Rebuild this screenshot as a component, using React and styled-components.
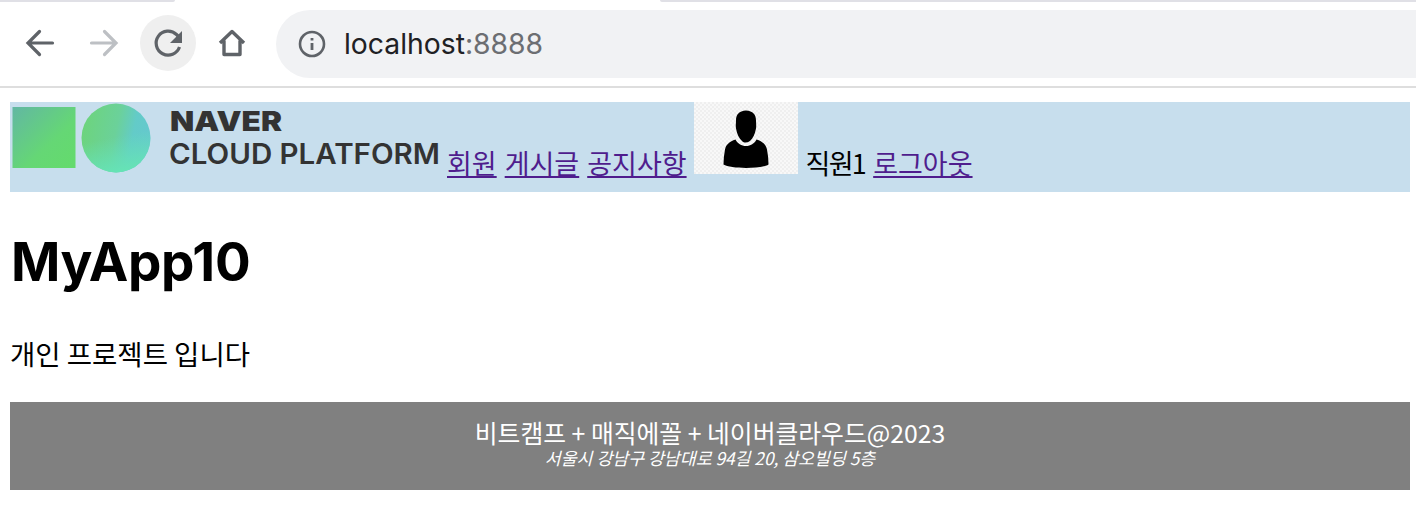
import React from "react";
import styled, { createGlobalStyle } from "styled-components";

const Global = createGlobalStyle`
  html, body { margin: 0; padding: 0; background: #fff; overflow: hidden; }
  body { font-family: Inter, "Noto Sans CJK KR", sans-serif; color: #000; }
`;
const KR = `"Noto Sans CJK KR", "Liberation Sans", sans-serif`;

const Chrome = styled.div`
  height: 88px; box-sizing: border-box; border-bottom: 2px solid #dedede; position: relative;
  display: flex; align-items: center; padding: 0 0 0 12px; background: #fff;
`;
const TabEdge = styled.div`
  position: absolute; top: 0; height: 2px; background: #e0e0e6; left: ${p => p.$l}px; right: ${p => p.$r}px;
  border-radius: ${p => p.$round};
`;
const IconSlot = styled.div`
  width: 56px; height: 56px; flex: none; border-radius: 50%; display: flex; align-items: center; justify-content: center;
  margin-right: 8px; background: ${p => p.$active ? "#efefef" : "transparent"};
`;
const UrlBar = styled.div`
  flex: 1; height: 68px; margin-left: 8px; margin-top: 2px; background: #f1f2f4; border-radius: 34px 0 0 34px;
  display: flex; align-items: center; padding-left: 22px; font: 400 28.3px Inter, sans-serif; color: #202124;
`;
const Host = styled.span` margin-left: 18px; `;
const Port = styled.span` color: #6c6e72; `;

const Page = styled.div` padding: 14px 6px 0 10px; `;
const Header = styled.header`
  background: #c7deed; height: 90px; box-sizing: border-box; font: 400 27px/30px ${KR}; white-space: nowrap;
  display: flex; align-items: flex-end;
`;
const Logo = styled.svg` display: block; flex: none; `;
const Nav = styled.a` color: #4f1d8d; text-decoration: underline; margin-left: ${p => p.$ml}px; padding-bottom: 14px; line-height: 30px; `;
const Avatar = styled.div`
  width: 104px; height: 72px; flex: none; margin: 0 8px 0 7px; align-self: flex-start;
  background-color: #f3f3f3;
  background-image: repeating-conic-gradient(#efefef 0 25%, #f8f8f8 0 50%);
  background-size: 4px 4px;
  display: flex; align-items: center; justify-content: center;
`;
const Who = styled.span` padding-bottom: 14px; letter-spacing: -1.7px; `;
const Title = styled.h1` font: 700 53px/64px Inter, sans-serif; letter-spacing: -0.3px; margin: 38px 0 0 1px; `;
const Para = styled.p` font: 400 27.5px/36px ${KR}; margin: 41px 0 0; `;
const Footer = styled.footer`
  margin-top: 31px; background: #808080; color: #fff; height: 88px; box-sizing: border-box; padding-top: 14px;
  text-align: center; font-family: ${KR};
`;
const FootMain = styled.div` font-size: 24.8px; line-height: 32px; `;
const FootSub = styled.div` font-size: 17.3px; line-height: 20px; font-style: italic; `;

export default function App() {
  return (
    <>
      <Global />
      <Chrome>
        <TabEdge $l={0} $r={1241} $round="0 0 6px 0" />
        <TabEdge $l={660} $r={0} $round="0 0 0 6px" />
        <IconSlot>
          <svg width="32" height="32" viewBox="0 0 32 32" fill="none" stroke="#5f6368" strokeWidth="3.2" strokeLinecap="round"><path d="M28.500 16H4.500M15.500 4.500 4 16l11.500 11.500" /></svg>
        </IconSlot>
        <IconSlot>
          <svg width="32" height="32" viewBox="0 0 32 32" fill="none" stroke="#bdc0c4" strokeWidth="3.2" strokeLinecap="round"><path d="M3.500 16h24M16.500 4.500 28 16 16.500 27.500" /></svg>
        </IconSlot>
        <IconSlot $active>
          <svg width="32" height="32" viewBox="0 0 32 32" fill="none"><path d="M27.500 20a12 12 0 1 1-3-12.500L27 10" stroke="#5f6368" strokeWidth="3.2" /><path d="M30 4v12H18z" fill="#5f6368" /></svg>
        </IconSlot>
        <IconSlot>
          <svg width="30" height="30" viewBox="0 0 30 30" fill="none" stroke="#5f6368" strokeWidth="3.4"><path d="M3 15 15 3.500 27 15M7 12.500V26.500h16V12.500" strokeLinejoin="round" /></svg>
        </IconSlot>
        <UrlBar>
          <svg width="28" height="28" viewBox="0 0 28 28" fill="none"><circle cx="14" cy="14" r="12" stroke="#5f6368" strokeWidth="2.6" /><path d="M14 13v7M14 8v2.600" stroke="#5f6368" strokeWidth="2.8" /></svg>
          <Host>localhost<Port>:8888</Port></Host>
        </UrlBar>
      </Chrome>
      <Page>
        <Header>
          <Logo width="437" height="90" viewBox="0 0 437 90">
            <defs>
              <linearGradient id="sq" x1="0" y1="0" x2="1" y2="1"><stop offset="0" stopColor="#62b7a3" /><stop offset=".6" stopColor="#65d775" /><stop offset="1" stopColor="#64db6c" /></linearGradient>
              <linearGradient id="ci" x1="0" y1="0.3" x2="1" y2="0.5"><stop offset="0" stopColor="#6dd47c" /><stop offset=".5" stopColor="#6bd19a" /><stop offset=".75" stopColor="#63cbc8" /><stop offset="1" stopColor="#65c8ce" /></linearGradient>
              <linearGradient id="cb" x1="0.4" y1="0.5" x2="0.5" y2="1"><stop offset="0" stopColor="#66e3b5" stopOpacity="0" /><stop offset="1" stopColor="#66e3b5" /></linearGradient>
            </defs>
            <rect x="2.500" y="5" width="63" height="61" fill="url(#sq)" />
            <circle cx="106" cy="36" r="34.500" fill="url(#ci)" />
            <circle cx="106" cy="36" r="34.500" fill="url(#cb)" />
            <text x="160" y="29" fontFamily="Inter, sans-serif" fontWeight="900" fontSize="27" fill="#333" textLength="112" lengthAdjust="spacingAndGlyphs">NAVER</text>
            <text x="159" y="62" fontFamily="Inter, sans-serif" fontWeight="600" fontSize="28" fill="#333" textLength="271" lengthAdjust="spacingAndGlyphs">CLOUD PLATFORM</text>
          </Logo>
          <Nav $ml={0}>회원</Nav>
          <Nav $ml={8}>게시글</Nav>
          <Nav $ml={8}>공지사항</Nav>
          <Avatar>
            <svg width="48" height="60" viewBox="0 0 48 60">
              <path d="M24 2.500c7 .5 10 4 10 10 0 3 .5 5 0 8-1.200 6-3 10-6 12.500-3 2-6 2-8 0-3-2.500-4.800-6.500-6-12.500-.5-3 0-5 0-8 0-6 3-9.500 10-10z" fill="#000" />
              <path d="M13.500 31.500c2 4 6 6.500 10.500 6.500s8.500-2.500 10.500-6.500c6 2 9.500 5 10.500 10 1 5 1.500 10 1.500 15-7 4.500-38 4.500-45 0 0-5 .5-10 1.500-15 1-5 4.500-8 10.500-10z" fill="#000" />
            </svg>
          </Avatar>
          <Who>직원1</Who>
          <Nav $ml={8}>로그아웃</Nav>
        </Header>
        <Title>MyApp10</Title>
        <Para>개인 프로젝트 입니다</Para>
        <Footer>
          <FootMain>비트캠프 + 매직에꼴 + 네이버클라우드@2023</FootMain>
          <FootSub>서울시 강남구 강남대로 94길 20, 삼오빌딩 5층</FootSub>
        </Footer>
      </Page>
    </>
  );
}
